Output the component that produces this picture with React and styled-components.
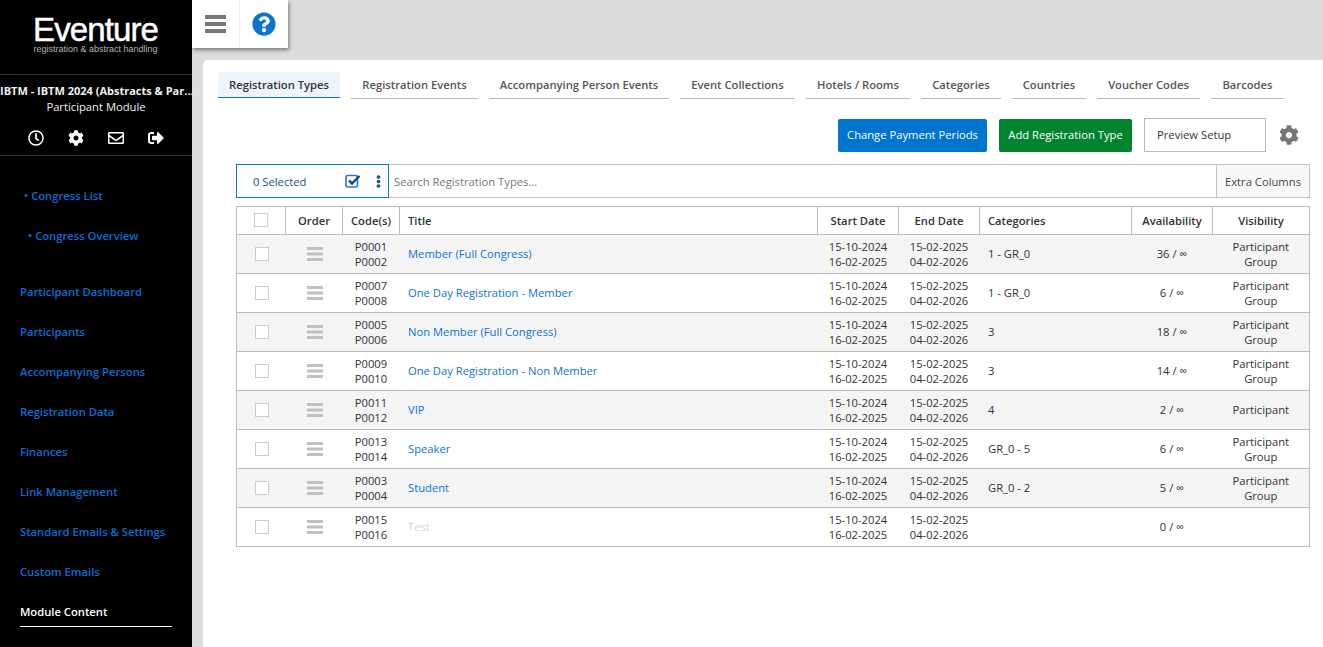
import React from "react";
import styled, { createGlobalStyle } from "styled-components";
import { FaRegClock, FaCog, FaRegEnvelope, FaSignOutAlt, FaQuestionCircle, FaEllipsisV } from "react-icons/fa";

const Global = createGlobalStyle`
  html, body { margin: 0; padding: 0; height: 100%; overflow: hidden; }
  body { font-family: "Open Sans", "Liberation Sans", sans-serif; font-size: 11.22px; color: #333; background: #dcdcdc; }
  * { box-sizing: border-box; }
`;

const Page = styled.div`display: flex; width: 100%; height: 647px; overflow: hidden;`;
const Sidebar = styled.aside`width: 192px; flex: none; background: #000; color: #fff; display: flex; flex-direction: column;`;
const Logo = styled.div`height: 75px; border-bottom: 1px solid #333; padding-top: 15px; text-align: center; padding-right: 1px;`;
const LogoName = styled.div`font-family: "Liberation Sans", sans-serif; font-size: 33px; line-height: 29px; letter-spacing: -0.9px; color: #fff; -webkit-text-stroke: 0.5px #fff;`;
const LogoSub = styled.div`font-family: "Liberation Sans", sans-serif; font-size: 9px; line-height: 10px; color: #b5b5b5;`;
const Congress = styled.div`height: 81px; border-bottom: 1px solid #333; padding-top: 8px; text-align: center;`;
const CongressTitle = styled.div`font-weight: 700; font-size: 11px; line-height: 16px; white-space: nowrap; color: #f1f1f1;`;
const ModuleName = styled.div`line-height: 16px; color: #f1f1f1;`;
const UserIcons = styled.div`display: flex; justify-content: center; align-items: center; gap: 24px; margin-top: 15px; font-size: 16px; line-height: 0;`;
const Nav = styled.nav`display: flex; flex-direction: column; padding-top: 20px;`;
const SubItem = styled.a`height: 40px; line-height: 40px; padding-left: ${p => p.$indent}px; color: #0a6ed1; font-weight: 600; white-space: nowrap;`;
const NavGroup = styled.div`display: flex; flex-direction: column; margin-top: 16px; padding: 0 20px;`;
const NavItem = styled.a`height: 40px; line-height: 40px; color: ${p => p.$active ? "#fff" : "#0a6ed1"}; font-weight: 600; white-space: nowrap; position: relative;`;
const ActiveLine = styled.span`position: absolute; left: 0; right: 0; bottom: 5px; height: 1px; background: #fff;`;

const Main = styled.main`flex: 1; min-width: 0; display: flex; flex-direction: column;`;
const Toolbar = styled.div`width: 96px; height: 48px; background: #fff; display: flex; box-shadow: 1px 2px 4px rgba(0,0,0,.45); flex: none;`;
const ToolCell = styled.div`width: ${p => p.$w}px; display: flex; align-items: center; justify-content: center; & + & { border-left: 1px solid #f0f0f0; }`;
const Panel = styled.section`margin: 12px 0 0 11px; flex: 1; background: #fff; border-radius: 5px 0 0 0; padding: 12px 13px 0 15px;`;
const Tabs = styled.div`display: flex; gap: 11px;`;
const Tab = styled.div`line-height: 26px; font-weight: 600; color: ${p => p.$active ? "#333" : "#555"}; white-space: nowrap;
  background: ${p => p.$active ? "#edf4fb" : "#fff"}; border-bottom: 1px solid ${p => p.$active ? "#0a75cf" : "#bbb"}; border-radius: 4px 4px 0 0;
  width: ${p => p.$w}px; text-align: center; height: ${p => p.$active ? 26 : 27}px;`;
const Actions = styled.div`display: flex; justify-content: flex-end; align-items: center; margin-top: 19px; padding-right: 11px; height: 34px;`;
const Button = styled.button`height: 33px; width: ${p => p.$w}px; border: 0; border-radius: 2px; color: #fff; font: 11.22px "Open Sans", sans-serif; background: ${p => p.$bg}; margin-right: 12px; padding: 0 0 2px;`;
const Preview = styled.div`width: 122px; height: 34px; border: 1px solid #bbb; line-height: 32px; padding-left: 12px; color: #333; margin-right: 13px;`;
const FilterBar = styled.div`display: flex; height: 34px; margin: 12px 0 0 18px; border: 1px solid #c4c4c4; border-left: 0;`;
const SelectBox = styled.div`width: 153px; flex: none; height: 34px; margin-top: -1px; border: 1px solid #0a75cf; display: flex; align-items: center; padding-left: 16px; color: #224f85;`;
const SelectCount = styled.span`flex: 1;`;
const SelectIcons = styled.span`display: flex; align-items: center; gap: 11px; padding-right: 3px; color: #1d5c9a;`;
const Search = styled.div`flex: 1; line-height: 33px; padding-left: 5px; color: #777;`;
const Extra = styled.div`width: 93px; flex: none; text-align: center; line-height: 33px; background: #f8f8f8; border-left: 1px solid #c4c4c4; color: #444;`;
const Table = styled.table`width: 1073px; margin: 8px 0 0 18px; border-collapse: collapse; table-layout: fixed; border: 1px solid #bdbdbd;`;
const Th = styled.th`height: 28px; padding: 0 ${p => p.$left ? 8 : 0}px 1px; font-weight: 600; font-size: 11.22px; color: #333; border: 1px solid #bdbdbd; text-align: ${p => p.$left ? "left" : "center"}; vertical-align: middle;`;
const Row = styled.tr`background: ${p => p.$odd ? "#f4f4f4" : "#fff"};`;
const Td = styled.td`height: 39px; padding: 0 ${p => p.$left ? 8 : 0}px 0 ${p => p.$left ? 8.5 : p.$nudge ? 2 : 0}px; padding-bottom: ${p => p.$single ? 2 : 0}px; font-size: 11.22px; line-height: 15px; color: #333; text-align: ${p => p.$left ? "left" : "center"}; border-top: 1px solid #bdbdbd; border-bottom: 1px solid #bdbdbd; vertical-align: middle;`;
const TitleLink = styled.a`color: ${p => p.$off ? "#d8d8d8" : "#0a75cf"};`;
const Check = styled.span`display: block; margin: 0 auto; width: 14px; height: 14px; background: #fff; border: 1px solid #ccc;`;
const Stacked = styled.div`white-space: nowrap;`;
const BarsSvg = styled.svg`display: block; margin: 0 auto;`;

const Bars = ({ size, color, gap, h }) => (
  <BarsSvg width={size} height={h * 3 + gap * 2} aria-hidden="true">
    <rect y="0" width={size} height={h} fill={color} />
    <rect y={h + gap} width={size} height={h} fill={color} />
    <rect y={(h + gap) * 2} width={size} height={h} fill={color} />
  </BarsSvg>
);

const CheckSquare = () => (
  <svg width="16" height="14" viewBox="0 0 16 14" aria-hidden="true">
    <rect x="1" y="1.5" width="11.5" height="11.5" rx="2" fill="none" stroke="#2b78bd" strokeWidth="1.6" />
    <path d="M4 6.5 L7 9.5 L14.5 2" fill="none" stroke="#163f73" strokeWidth="2.4" />
  </svg>
);

const cols = [49, 57, 57, 418, 81, 81, 152, 81, 97];
const rows = [
  ["P0001", "P0002", "Member (Full Congress)", "1 - GR_0", "36 / ∞", true],
  ["P0007", "P0008", "One Day Registration - Member", "1 - GR_0", "6 / ∞", true],
  ["P0005", "P0006", "Non Member (Full Congress)", "3", "18 / ∞", true],
  ["P0009", "P0010", "One Day Registration - Non Member", "3", "14 / ∞", true],
  ["P0011", "P0012", "VIP", "4", "2 / ∞", false],
  ["P0013", "P0014", "Speaker", "GR_0 - 5", "6 / ∞", true],
  ["P0003", "P0004", "Student", "GR_0 - 2", "5 / ∞", true],
  ["P0015", "P0016", "Test", "", "0 / ∞", null],
];
const tabs = [["Registration Types", 122], ["Registration Events", 127], ["Accompanying Person Events", 180], ["Event Collections", 115], ["Hotels / Rooms", 104], ["Categories", 80], ["Countries", 74], ["Voucher Codes", 103], ["Barcodes", 73]];
const navItems = ["Participant Dashboard", "Participants", "Accompanying Persons", "Registration Data", "Finances", "Link Management", "Standard Emails & Settings", "Custom Emails"];

export default function App() {
  return (
    <Page>
      <Global />
      <Sidebar>
        <Logo>
          <LogoName>Eventure</LogoName>
          <LogoSub>registration &amp; abstract handling</LogoSub>
        </Logo>
        <Congress>
          <CongressTitle>IBTM - IBTM 2024 (Abstracts &amp; Par...</CongressTitle>
          <ModuleName>Participant Module</ModuleName>
          <UserIcons>
            <FaRegClock /><FaCog /><FaRegEnvelope /><FaSignOutAlt />
          </UserIcons>
        </Congress>
        <Nav>
          <SubItem $indent={24}>• Congress List</SubItem>
          <SubItem $indent={28}>• Congress Overview</SubItem>
          <NavGroup>
            {navItems.map(n => <NavItem key={n}>{n}</NavItem>)}
            <NavItem $active>Module Content<ActiveLine /></NavItem>
          </NavGroup>
        </Nav>
      </Sidebar>
      <Main>
        <Toolbar>
          <ToolCell $w={47}><Bars size={21} h={4} gap={3} color="#777" /></ToolCell>
          <ToolCell $w={49}><FaQuestionCircle size={24} color="#0a75cf" /></ToolCell>
        </Toolbar>
        <Panel>
          <Tabs>
            {tabs.map(([t, w], i) => <Tab key={t} $active={i === 0} $w={w}>{t}</Tab>)}
          </Tabs>
          <Actions>
            <Button $w={149} $bg="#0075cf">Change Payment Periods</Button>
            <Button $w={133} $bg="#02832e">Add Registration Type</Button>
            <Preview>Preview Setup</Preview>
            <FaCog size={20} color="#777" />
          </Actions>
          <FilterBar>
            <SelectBox>
              <SelectCount>0 Selected</SelectCount>
              <SelectIcons><CheckSquare /><FaEllipsisV size={13} color="#1d4f85" /></SelectIcons>
            </SelectBox>
            <Search>Search Registration Types...</Search>
            <Extra>Extra Columns</Extra>
          </FilterBar>
          <Table>
            <colgroup>{cols.map((c, i) => <col key={i} style={{ width: c }} />)}</colgroup>
            <thead>
              <tr>
                <Th><Check /></Th>
                <Th>Order</Th>
                <Th>Code(s)</Th>
                <Th $left>Title</Th>
                <Th>Start Date</Th>
                <Th>End Date</Th>
                <Th $left>Categories</Th>
                <Th>Availability</Th>
                <Th>Visibility</Th>
              </tr>
            </thead>
            <tbody>
              {rows.map((r, i) => (
                <Row key={r[0]} $odd={i % 2 === 0}>
                  <Td $nudge><Check /></Td>
                  <Td $nudge><Bars size={16} h={3} gap={2.5} color="#c0c0c0" /></Td>
                  <Td><Stacked>{r[0]}</Stacked><Stacked>{r[1]}</Stacked></Td>
                  <Td $left $single><TitleLink $off={r[5] === null}>{r[2]}</TitleLink></Td>
                  <Td><Stacked>15-10-2024</Stacked><Stacked>16-02-2025</Stacked></Td>
                  <Td><Stacked>15-02-2025</Stacked><Stacked>04-02-2026</Stacked></Td>
                  <Td $left $single>{r[3]}</Td>
                  <Td $single>{r[4]}</Td>
                  <Td $single={r[5] === false}>
                    {r[5] !== null && <Stacked>Participant</Stacked>}
                    {r[5] === true && <Stacked>Group</Stacked>}
                  </Td>
                </Row>
              ))}
            </tbody>
          </Table>
        </Panel>
      </Main>
    </Page>
  );
}
